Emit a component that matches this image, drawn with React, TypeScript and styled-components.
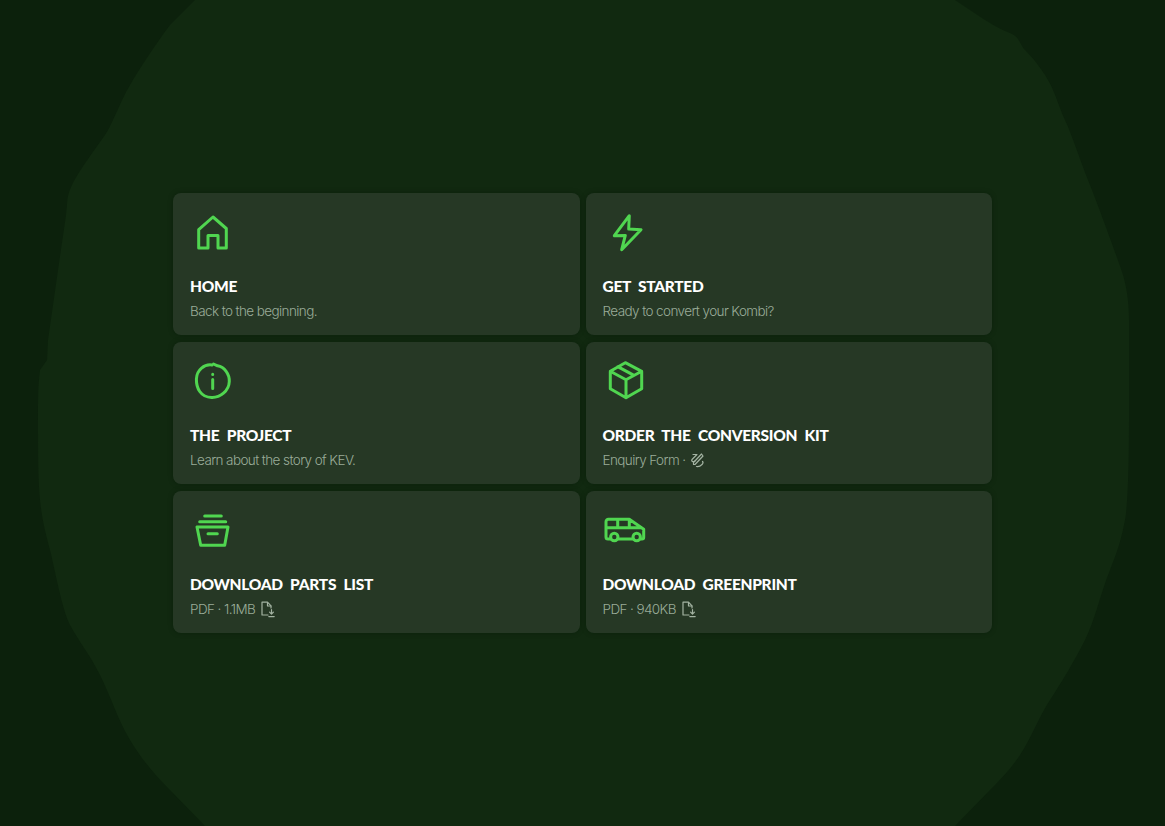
import { ReactNode } from 'react';
import styled, { createGlobalStyle } from 'styled-components';

const GlobalStyle = createGlobalStyle`
  html, body {
    margin: 0;
    padding: 0;
    background: #0c210c;
  }
`;

const Page = styled.main`
  position: relative;
  width: 100%;
  height: 826px;
  overflow: hidden;
  display: flex;
  align-items: center;
  justify-content: center;
  font-family: Inter, "Liberation Sans", sans-serif;
`;

const Blob = styled.svg`
  position: absolute;
  inset: 0;
  width: 100%;
  height: 100%;
`;

const Grid = styled.nav`
  position: relative;
  width: 819px;
  display: grid;
  grid-template-columns: 1fr 1fr;
  grid-auto-rows: 142px;
  gap: 7px 6px;
`;

const Card = styled.a`
  display: flex;
  flex-direction: column;
  box-sizing: border-box;
  padding: 18px 17px 0;
  background: #263825;
  border-radius: 8px;
  box-shadow: 0 0 5px rgba(4, 20, 4, 0.35);
  text-decoration: none;
`;

const IconBox = styled.svg`
  width: 44px;
  height: 44px;
  flex: none;
  fill: none;
  stroke: #50d650;
  stroke-width: 3;
  stroke-linecap: round;
  stroke-linejoin: round;
`;

const Title = styled.h3`
  margin: 20px 0 0;
  font-family: Lato, "Liberation Sans", sans-serif;
  font-size: 15.5px;
  line-height: 22px;
  font-weight: 900;
  letter-spacing: -0.3px;
  word-spacing: 4px;
  color: #ffffff;
`;

const Sub = styled.p`
  display: flex;
  align-items: center;
  margin: 4px 0 0;
  font-size: 13.5px;
  line-height: 20px;
  font-weight: 300;
  letter-spacing: -0.6px;
  color: #9aac99;
`;

const SmallIcon = styled.span`
  display: inline-flex;
  margin-left: 5px;
  color: #a3b3a2;
`;

const InlineIcon = styled.svg`
  width: 16px;
  height: 17px;
  fill: none;
  stroke: currentColor;
  stroke-width: 1.2;
  stroke-linecap: round;
  stroke-linejoin: round;
`;

const FileDown = () => (
  <InlineIcon viewBox="0 0 16 17">
    <path d="M8 14H2V1.200h5.500L11 4.800V7" />
    <path d="M7.500 1.500v3.500H11" />
    <path d="M11.500 8.500v4.500M9.600 11.200l1.900 1.900 1.900-1.900M8.800 15.600h5.400" />
  </InlineIcon>
);

const PencilScribble = () => (
  <InlineIcon viewBox="0 0 16 17">
    <path d="M5 12.500l8-8.500-1.500-2-8 8.500v2z" />
    <path d="M3 2.500h4L2 7.500c-1 1.500 1 3 3 1.500" />
    <path d="M6.500 14.500c2 .5 4-.5 5.500-2 1-1 1.500-2 .5-3" />
  </InlineIcon>
);

interface Item {
  title: string;
  sub: string;
  icon: ReactNode;
  extra?: ReactNode;
}

const items: Item[] = [
  {
    title: 'HOME',
    sub: 'Back to the beginning.',
    icon: <path d="M23 6 8.700 18.700V37H18V24.500h10V37h8.300V17.500Z" />,
  },
  {
    title: 'GET STARTED',
    sub: 'Ready to convert your Kombi?',
    icon: <path d="M26.300 4.700 11.300 24.700l11-.3-3.600 14.300L38 18.700l-12.300-.7Z" />,
  },
  {
    title: 'THE PROJECT',
    sub: 'Learn about the story of KEV.',
    icon: (
      <>
        <path d="M22 5C14.500 4 6.800 9.500 6.400 19 6.200 28 10.500 37.200 21.500 37.400 30 37.800 39 31 39.300 21.500 39.600 14 34.500 7 27.500 5.800L23.500 4" />
        <path d="M22.700 14.300v.1M22.700 19.500v9" />
      </>
    ),
  },
  {
    title: 'ORDER THE CONVERSION KIT',
    sub: 'Enquiry Form ·',
    icon: (
      <path d="M22.300 2.700 38.700 11.300V28.700L23 37.700 7.300 28.700V11.300ZM7.300 11.300 23 19.700l15.700-8.400M23 19.700v18M14.700 6.700 31 15.300" />
    ),
    extra: <PencilScribble />,
  },
  {
    title: 'DOWNLOAD PARTS LIST',
    sub: 'PDF · 1.1MB',
    icon: (
      <path d="M14.700 7h16.600M9.700 12.700h26M7 18h31l-3.300 18.300H10.700ZM18 24.700h9.300" />
    ),
    extra: <FileDown />,
  },
  {
    title: 'DOWNLOAD GREENPRINT',
    sub: 'PDF · 940KB',
    icon: (
      <>
        <path d="M7.500 30H5a2 2 0 0 1-2-2V13a2.500 2.500 0 0 1 2.500-2.700h20.800l14.400 10v8a1.700 1.700 0 0 1-1.700 1.700h-1M30 30H15M3 18.700h34M14.700 10.500v8.200M26.300 10.500v8.200" />
        <circle cx="11.300" cy="28" r="3.700" />
        <circle cx="33.700" cy="28" r="3.700" />
      </>
    ),
    extra: <FileDown />,
  },
];

export default function App() {
  return (
    <Page>
      <GlobalStyle />
      <Blob viewBox="0 0 1165 826" preserveAspectRatio="none" aria-hidden="true">
        <path
          fill="#112910"
          d="M195 0 170 25C155 45 140 68 130 85S112 125 105 135 78 172 72 185 68 200 66 215L58 270 48 340 47 360 40 370C38 385 38 400 38 420 38 450 38 480 40 500S46 535 50 550 62 610 70 625 90 655 100 675 118 720 130 740 155 775 170 790L205 826H955L990 790C1000 780 1010 770 1020 755S1040 715 1050 700 1075 660 1085 640 1100 595 1110 570 1122 535 1125 520 1129 460 1129 420V320C1129 300 1126 285 1123 275S1100 210 1090 185 1072 135 1065 120 1055 90 1045 75 1030 55 1025 50 1020 37 1010 33 995 26 985 20L955 0Z"
        />
      </Blob>
      <Grid>
        {items.map((item) => (
          <Card key={item.title} href="#">
            <IconBox viewBox="0 0 44 44">{item.icon}</IconBox>
            <Title>{item.title}</Title>
            <Sub>
              {item.sub}
              {item.extra && <SmallIcon>{item.extra}</SmallIcon>}
            </Sub>
          </Card>
        ))}
      </Grid>
    </Page>
  );
}
